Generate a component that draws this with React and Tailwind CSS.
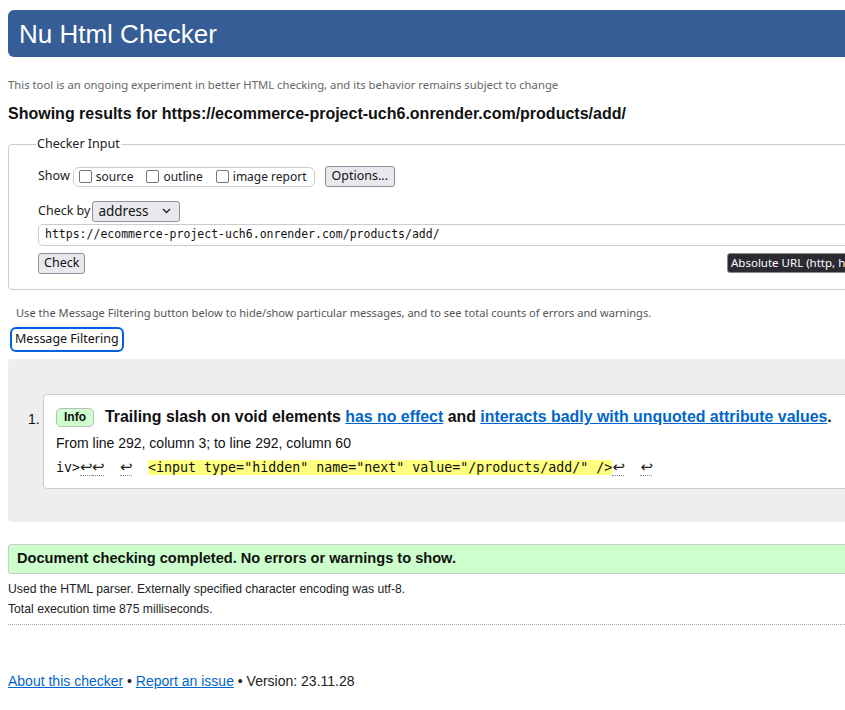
import React from 'react';

const ui = { fontFamily: '"Noto Sans", "Open Sans", sans-serif' };
const arial = { fontFamily: '"Liberation Sans", Arial, sans-serif' };
const mono = { fontFamily: '"DejaVu Sans Mono", "Liberation Mono", monospace' };
const sym = { fontFamily: '"DejaVu Sans", sans-serif' };

const Ret = () => (
  <span className="inline-block w-[12px] text-center border-b border-dotted border-[#888] text-[#222] text-[15px] leading-[16px]" style={sym}>↩</span>
);

const Checkbox = ({ label }) => (
  <label className="flex items-center gap-[4px] text-[12px] text-[#222]">
    <span className="inline-block w-[13px] h-[13px] border border-[#767676] rounded-[2px] bg-white" />
    {label}
  </label>
);

export default function App() {
  return (
    <div className="w-[845px] h-[710px] overflow-hidden bg-white" style={arial}>
      <div className="w-[1000px] px-[8px] pt-[10px]">
        {/* header */}
        <div className="h-[47px] bg-[#365d95] rounded-[6px] flex items-center pl-[11px]">
          <h1 className="text-[26px] text-white leading-none">Nu Html Checker</h1>
        </div>

        <p className="mt-[20px] text-[11.3px] text-[#666] leading-[16px]" style={ui}>
          This tool is an ongoing experiment in better HTML checking, and its behavior remains subject to change
        </p>
        <h2 className="mt-[10px] text-[16px] font-bold text-[#111] leading-[22px]">
          Showing results for https://ecommerce-project-uch6.onrender.com/products/add/
        </h2>

        {/* checker input */}
        <fieldset className="mt-[10px] border border-[#ccc] rounded-[4px] pl-[29px] h-[155px]" style={ui}>
          <legend className="ml-[-2px] px-[1px] text-[12.5px] text-[#222]">Checker Input</legend>
          <div className="flex items-center mt-[12px] h-[22px] text-[12.5px] text-[#222]">
            <span>Show</span>
            <div className="ml-[3px] h-[20px] border border-[#ccc] rounded-[6px] flex items-center gap-[13px] pl-[5px] pr-[7px]">
              <Checkbox label="source" />
              <Checkbox label="outline" />
              <Checkbox label="image report" />
            </div>
            <button className="ml-[10px] h-[21px] px-[6px] border border-[#8f8f9d] rounded-[3px] bg-[#e9e9ed] text-[12.5px] text-[#111]">
              Options...
            </button>
          </div>
          <div className="flex items-center mt-[13px] h-[21px] text-[12.5px] text-[#222]">
            <span>Check by</span>
            <div className="ml-[2px] w-[88px] h-[21px] border border-[#8f8f9d] rounded-[3px] bg-[#e9e9ed] flex items-center justify-between pl-[5px] pr-[8px]">
              <span className="text-[13.5px] text-[#111]">address</span>
              <svg width="9" height="6" viewBox="0 0 9 6">
                <path d="M1 1 L4.5 4.5 L8 1" fill="none" stroke="#222" strokeWidth="1.4" />
              </svg>
            </div>
          </div>
          <div className="mt-[2px] h-[22px] border border-[#ccc] rounded-l-[5px] flex items-center pl-[6px] text-[11.5px] text-[#111]" style={mono}>
            https://ecommerce-project-uch6.onrender.com/products/add/
          </div>
          <div className="relative mt-[3px] h-[21px]">
            <button className="h-[21px] px-[5px] border border-[#8f8f9d] rounded-[3px] bg-[#e9e9ed] text-[12.5px] text-[#111] leading-none">
              Check
            </button>
            <div className="absolute left-[689px] top-[4px] h-[20px] px-[3px] bg-[#2b2a33] border border-[#888] rounded-[3px] text-white text-[11.5px] flex items-center whitespace-nowrap">
              Absolute URL (http, https, ftp, data)
            </div>
          </div>
        </fieldset>

        <p className="mt-[15px] ml-[8px] text-[11.1px] text-[#555] leading-[16px]" style={ui}>
          Use the Message Filtering button below to hide/show particular messages, and to see total counts of errors and warnings.
        </p>
        <button className="mt-[6px] ml-[2px] h-[25px] px-[3px] border-2 border-[#0060df] rounded-[6px] bg-white text-[12.5px] text-[#111] leading-none" style={ui}>
          Message Filtering
        </button>

        {/* results */}
        <div className="mt-[7px] h-[163px] bg-[#eee] rounded-[4px] pt-[35px] pl-[20px] flex">
          <span className="w-[15px] mt-[15px] text-[14px] text-[#111]">1.</span>
          <div className="h-[95px] flex-1 bg-white border border-[#ccc] rounded-[4px] pl-[12px] pt-[12px]">
            <div className="flex items-center h-[20px]">
              <span className="h-[19px] px-[7px] bg-[#ccffcc] border border-[#bbb] rounded-[5px] text-[12px] font-bold text-[#111] flex items-center">Info</span>
              <span className="ml-[11px] text-[15.9px] font-bold text-[#111]">
                Trailing slash on void elements{' '}
                <a className="text-[#0066cc] underline">has no effect</a>{' '}and{' '}
                <a className="text-[#0066cc] underline">interacts badly with unquoted attribute values</a>.
              </span>
            </div>
            <p className="mt-[8px] text-[14px] text-[#111] leading-[16px]">From line 292, column 3; to line 292, column 60</p>
            <p className="mt-[8px] text-[13.3px] text-[#111] leading-[18px] whitespace-pre" style={mono}>
              iv&gt;<Ret /><Ret />{'  '}<Ret />{'  '}
              <span className="bg-[#ffff80]">&lt;input type="hidden" name="next" value="/products/add/" /&gt;</span>
              <Ret />{'  '}<Ret />
            </p>
          </div>
        </div>

        <div className="mt-[22px] h-[30px] bg-[#ccffcc] border border-[#ccc] rounded-[3px] flex items-center pl-[8px]">
          <span className="text-[14.6px] font-bold text-[#111]">Document checking completed. No errors or warnings to show.</span>
        </div>
        <p className="mt-[7px] text-[12.2px] text-[#222] leading-[16px]">Used the HTML parser. Externally specified character encoding was utf-8.</p>
        <p className="mt-[4px] text-[12.2px] text-[#222] leading-[16px]">Total execution time 875 milliseconds.</p>
        <div className="mt-[7px] w-[837px] border-t border-dotted border-[#aaa]" />

        <p className="mt-[46px] text-[14px] text-[#222]">
          <a className="text-[#0066cc] underline">About this checker</a> •{' '}
          <a className="text-[#0066cc] underline">Report an issue</a> • Version: 23.11.28
        </p>
      </div>
    </div>
  );
}
